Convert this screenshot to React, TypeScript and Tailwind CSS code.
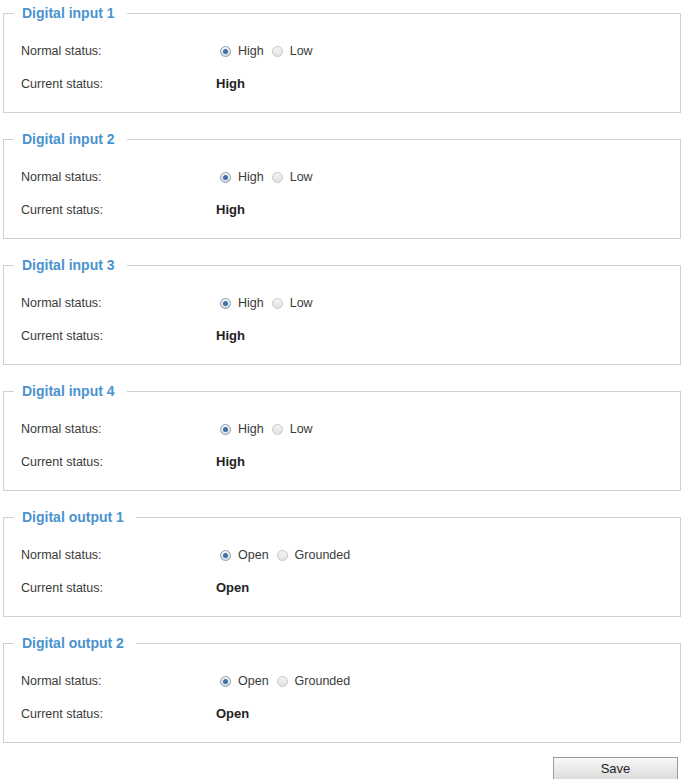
import React from "react";

type Section = {
  title: string;
  options: [string, string];
  current: string;
};

const sections: Section[] = [
  { title: "Digital input 1", options: ["High", "Low"], current: "High" },
  { title: "Digital input 2", options: ["High", "Low"], current: "High" },
  { title: "Digital input 3", options: ["High", "Low"], current: "High" },
  { title: "Digital input 4", options: ["High", "Low"], current: "High" },
  { title: "Digital output 1", options: ["Open", "Grounded"], current: "Open" },
  { title: "Digital output 2", options: ["Open", "Grounded"], current: "Open" },
];

function Radio({ checked }: { checked: boolean }) {
  return checked ? (
    <span className="flex h-[11px] w-[11px] items-center justify-center rounded-full border border-[#8a9aab] bg-gradient-to-b from-[#f4f6f8] to-[#d6dde5]">
      <span className="block h-[5px] w-[5px] rounded-full bg-[#3f6fa6]" />
    </span>
  ) : (
    <span className="block h-[11px] w-[11px] rounded-full border border-[#c4c8cc] bg-gradient-to-b from-[#f4f4f4] to-[#e0e2e4]" />
  );
}

function Group({ s }: { s: Section }) {
  return (
    <fieldset className="ml-[3px] border border-[#d0d0d0] pl-[10px] pb-[18px]">
      <legend className="px-[8px] pr-[12px] text-[14px] font-bold leading-[16px] text-[#4b93cf]">
        {s.title}
      </legend>
      <div className="grid grid-cols-[195px_1fr] gap-y-[13px] pl-[7px] pt-[20px] text-[12.5px] text-[#3a3a3a]">
        <div className="flex h-[20px] items-center">Normal status:</div>
        <div className="flex h-[20px] items-center">
          <span className="ml-[4px] block">
            <Radio checked />
          </span>
          <span className="ml-[7px]">{s.options[0]}</span>
          <span className="ml-[8px] block">
            <Radio checked={false} />
          </span>
          <span className="ml-[7px]">{s.options[1]}</span>
        </div>
        <div className="flex h-[20px] items-center">Current status:</div>
        <div className="flex h-[20px] items-center text-[13px] font-bold text-[#222]">{s.current}</div>
      </div>
    </fieldset>
  );
}

export default function App() {
  return (
    <div
      className="flex min-h-[779px] w-[681px] flex-col bg-white pt-[5px]"
      style={{ fontFamily: '"Liberation Sans", Arial, sans-serif' }}
    >
      <div className="flex flex-col gap-[18px]">
        {sections.map((s) => (
          <Group key={s.title} s={s} />
        ))}
      </div>
      <div className="mt-[14px] flex justify-end pr-[3px]">
        <button className="h-[23px] w-[125px] border border-[#9a9a9a] bg-gradient-to-b from-[#f8f8f8] to-[#dcdcdc] text-[13px] text-[#222]">
          Save
        </button>
      </div>
    </div>
  );
}
